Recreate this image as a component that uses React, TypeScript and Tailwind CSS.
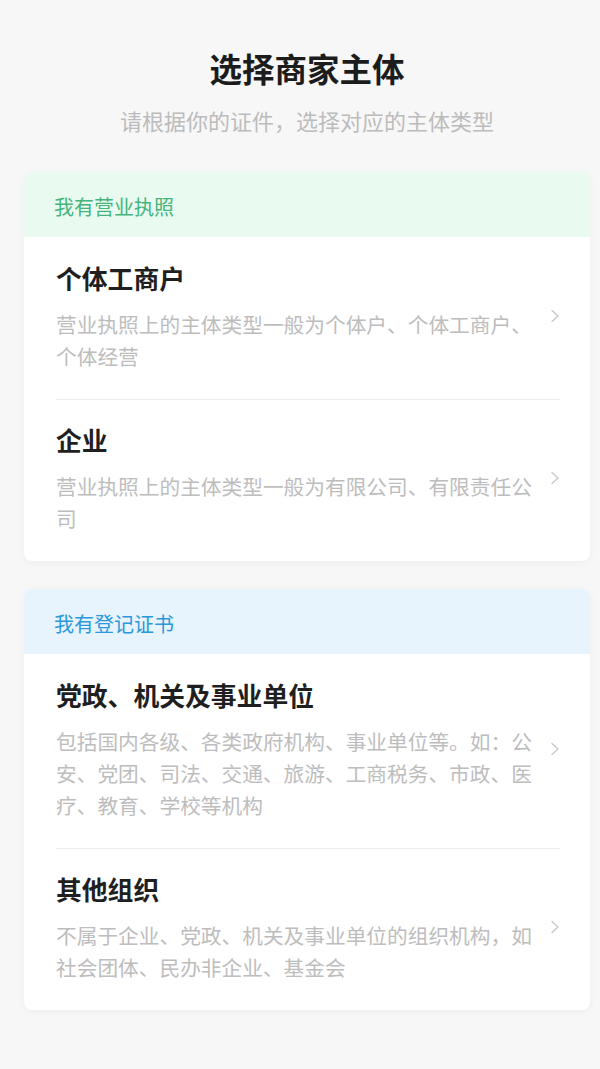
const font = { fontFamily: '"Noto Sans CJK SC", "Noto Sans", sans-serif' };

type Item = { title: string; desc: string };

type Group = {
  label: string;
  tone: "green" | "blue";
  items: Item[];
};

const groups: Group[] = [
  {
    label: "我有营业执照",
    tone: "green",
    items: [
      {
        title: "个体工商户",
        desc: "营业执照上的主体类型一般为个体户、个体工商户、个体经营",
      },
      {
        title: "企业",
        desc: "营业执照上的主体类型一般为有限公司、有限责任公司",
      },
    ],
  },
  {
    label: "我有登记证书",
    tone: "blue",
    items: [
      {
        title: "党政、机关及事业单位",
        desc: "包括国内各级、各类政府机构、事业单位等。如：公安、党团、司法、交通、旅游、工商税务、市政、医疗、教育、学校等机构",
      },
      {
        title: "其他组织",
        desc: "不属于企业、党政、机关及事业单位的组织机构，如社会团体、民办非企业、基金会",
      },
    ],
  },
];

function Chevron() {
  return (
    <svg width="10" height="14" viewBox="0 0 10 14" className="ml-[14px] shrink-0">
      <polyline
        points="2,1.5 8,7 2,12.5"
        fill="none"
        stroke="#c9c9c9"
        strokeWidth="1.4"
        strokeLinecap="round"
        strokeLinejoin="round"
      />
    </svg>
  );
}

function GroupCard({ group }: { group: Group }) {
  const headerClass =
    group.tone === "green"
      ? "bg-[#e9fbf1] text-[#45b47b]"
      : "bg-[#e7f3fd] text-[#2b98da]";

  return (
    <div className="overflow-hidden rounded-[8px] bg-white shadow-[0_2px_8px_rgba(0,0,0,0.04)]">
      <div className={`flex h-[65px] items-center pl-[30px] pt-[4px] text-[20px] ${headerClass}`}>
        {group.label}
      </div>
      <div className="pl-[32px] pr-[30px]">
        {group.items.map((item, i) => (
          <div
            key={item.title}
            className={`flex items-center pb-[27px] ${i === 0 ? "pt-[23px]" : "pt-[22px]"} ${
              i < group.items.length - 1 ? "border-b border-[#ececec]" : ""
            }`}
          >
            <div className="w-[480px] shrink-0">
              <div className="text-[25.8px] font-bold leading-[36px] text-[#1f1f1f]">
                {item.title}
              </div>
              <div className="mt-[12px] text-[20.7px] leading-[32px] text-[#bdbdbd]">
                {item.desc}
              </div>
            </div>
            <Chevron />
          </div>
        ))}
      </div>
    </div>
  );
}

export default function App() {
  return (
    <div className="min-h-screen bg-[#f7f7f8]" style={font}>
      <div className="ml-[24px] w-[566px] pt-[46px]">
        <div className="text-center">
          <h1 className="text-[32.5px] font-bold leading-[44px] text-[#1c1c1c]">选择商家主体</h1>
          <p className="mt-[15px] text-[22px] leading-[30px] text-[#bcbcbc]">
            请根据你的证件，选择对应的主体类型
          </p>
        </div>

        <div className="mt-[37px] flex flex-col gap-[28px]">
          {groups.map((g) => (
            <GroupCard key={g.label} group={g} />
          ))}
        </div>
      </div>
    </div>
  );
}
